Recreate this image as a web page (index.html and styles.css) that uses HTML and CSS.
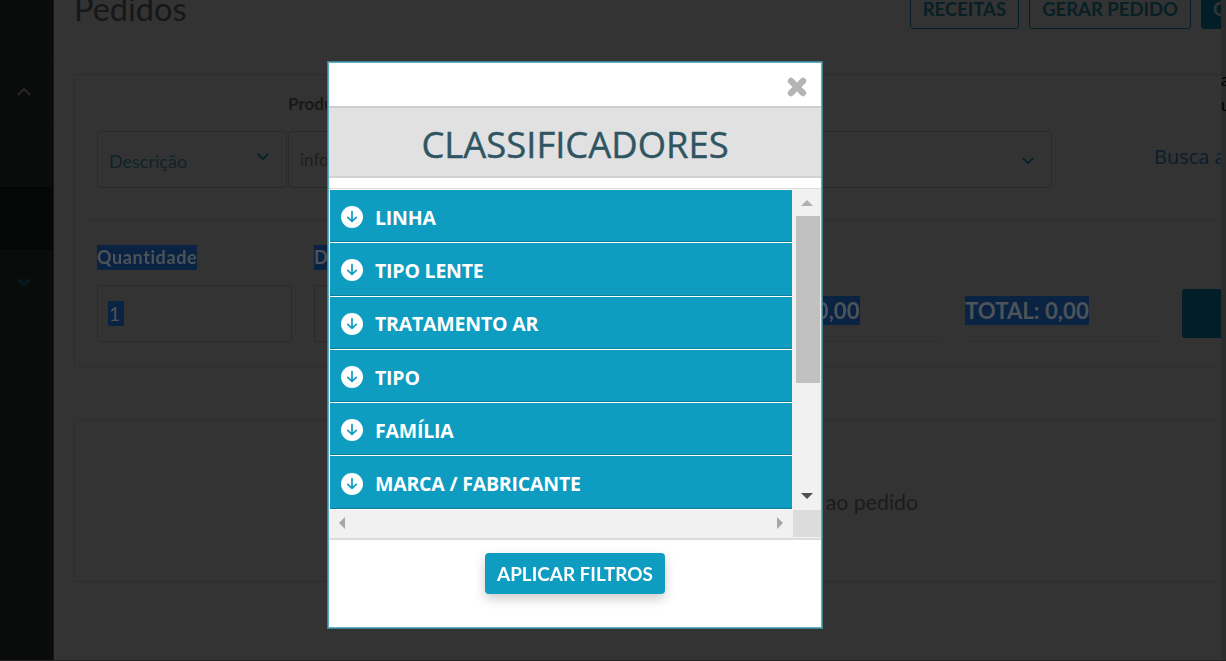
FILE: index.html
```html
<!DOCTYPE html>
<html lang="pt-BR">
<head>
<meta charset="utf-8">
<title>Pedidos</title>
<link rel="stylesheet" href="styles.css">
</head>
<body>
<div class="app">
  <nav class="sidebar">
    <div class="seg seg-a"></div>
    <div class="seg seg-b"><svg class="chev" viewBox="0 0 16 10"><path d="M2 8l6-6 6 6"/></svg></div>
    <div class="seg seg-b"></div>
    <div class="seg seg-c"></div>
    <div class="seg seg-b teal"><svg class="chev" viewBox="0 0 16 10"><path d="M2 2l6 6 6-6"/></svg></div>
    <div class="seg seg-rest"></div>
  </nav>
  <main class="main">
    <header class="page-head">
      <h1 class="page-title">Pedidos</h1>
      <div class="head-actions">
        <a class="btn-outline">RECEITAS</a>
        <a class="btn-outline">GERAR PEDIDO</a>
        <a class="btn-solid">GRAVAR</a>
      </div>
    </header>
    <section class="card card-form">
      <div class="label-row"><span class="label">Produto</span></div>
      <div class="search-row">
        <div class="field select-a"><span class="field-text">Descrição</span><svg class="field-chev" viewBox="0 0 16 10"><path d="M2 2l6 6 6-6"/></svg></div>
        <div class="field input-b"><span class="placeholder">informe o produto</span></div>
        <div class="field select-c"><svg class="field-chev low" viewBox="0 0 16 10"><path d="M2 2l6 6 6-6"/></svg></div>
        <a class="link">Busca avançada</a>
      </div>
      <hr class="divider">
      <div class="qty-row">
        <div class="col col-qty">
          <span class="label sel">Quantidade</span>
          <div class="field qty-field"><span class="sel qty-value">1</span></div>
        </div>
        <div class="col col-disc">
          <span class="label sel">Desconto</span>
          <div class="field qty-field"></div>
        </div>
        <div class="col col-val">
          <div class="total-box"><span class="total sel">VALOR: 0,00</span></div>
        </div>
        <div class="col col-total">
          <div class="total-box"><span class="total sel">TOTAL: 0,00</span></div>
        </div>
        <div class="add-btn"></div>
      </div>
    </section>
    <section class="card card-empty">Nenhum produto adicionado ao pedido</section>
  </main>
  <aside class="edge"><span>a</span><span>u</span></aside>
</div>

<div class="backdrop"></div>
<div class="modal">
  <div class="modal-top">
    <svg class="close" viewBox="0 0 22 22"><path d="M5 5l12 12M17 5L5 17"/></svg>
  </div>
  <div class="modal-title">CLASSIFICADORES</div>
  <div class="modal-gap"></div>
  <div class="scroller">
    <div class="list">
      <div class="item"><svg class="ico" viewBox="0 0 22 22"><circle cx="11" cy="11" r="11"/><path d="M11 5.5v10M6.8 11.3l4.2 4.2 4.2-4.2"/></svg>LINHA</div>
      <div class="item"><svg class="ico" viewBox="0 0 22 22"><circle cx="11" cy="11" r="11"/><path d="M11 5.5v10M6.8 11.3l4.2 4.2 4.2-4.2"/></svg>TIPO LENTE</div>
      <div class="item"><svg class="ico" viewBox="0 0 22 22"><circle cx="11" cy="11" r="11"/><path d="M11 5.5v10M6.8 11.3l4.2 4.2 4.2-4.2"/></svg>TRATAMENTO AR</div>
      <div class="item"><svg class="ico" viewBox="0 0 22 22"><circle cx="11" cy="11" r="11"/><path d="M11 5.5v10M6.8 11.3l4.2 4.2 4.2-4.2"/></svg>TIPO</div>
      <div class="item"><svg class="ico" viewBox="0 0 22 22"><circle cx="11" cy="11" r="11"/><path d="M11 5.5v10M6.8 11.3l4.2 4.2 4.2-4.2"/></svg>FAMÍLIA</div>
      <div class="item"><svg class="ico" viewBox="0 0 22 22"><circle cx="11" cy="11" r="11"/><path d="M11 5.5v10M6.8 11.3l4.2 4.2 4.2-4.2"/></svg>MARCA / FABRICANTE</div>
      <div class="item"></div>
    </div>
    <div class="vbar">
      <svg class="arrow" viewBox="0 0 14 8"><path class="a-light" d="M7 1l6 6H1z"/></svg>
      <div class="track"><div class="thumb"></div></div>
      <svg class="arrow" viewBox="0 0 14 8"><path class="a-dark" d="M1 1h12L7 7z"/></svg>
    </div>
    <div class="hbar">
      <svg class="harrow" viewBox="0 0 8 14"><path d="M7 1v12L1 7z"/></svg>
      <svg class="harrow" viewBox="0 0 8 14"><path d="M1 1v12l6-6z"/></svg>
    </div>
    <div class="corner"></div>
  </div>
  <div class="modal-foot">
    <button class="apply">APLICAR FILTROS</button>
  </div>
</div>
</body>
</html>
```
FILE: styles.css
```css
* { box-sizing: border-box; }
html, body { margin: 0; height: 100%; overflow: hidden; background: #b0b0b0; }
body { font-family: "Lato", "Open Sans", sans-serif; color: #555; }

.app { display: flex; width: 1226px; height: 660px; overflow: hidden; background: #fff; }

.sidebar { width: 54px; flex: none; display: flex; flex-direction: column; background: #323c3c; border-right: 1px solid #6e6e6e; }
.seg { display: flex; align-items: center; justify-content: center; padding-right: 6px; border-bottom: 1px solid #3c4646; }
.seg-a { height: 61px; }
.seg-b { height: 63px; }
.seg-c { height: 64px; background: #1c2626; }
.seg-rest { flex: 1; border-bottom: 0; }
.chev { width: 16px; height: 10px; fill: none; stroke: #c8c8c8; stroke-width: 2; }
.teal .chev { stroke: #0e9cc1; }

.main { flex: 1; min-width: 0; padding-left: 20px; overflow: hidden; }

.page-head { display: flex; justify-content: space-between; align-items: center; height: 41px; margin-top: -12px; margin-bottom: 45px; margin-right: -30px; }
.page-title { margin: 0; font-size: 32.5px; font-weight: 400; color: #6f7478; line-height: 41px; margin-top: -1px; }
.head-actions { display: flex; gap: 10px; }
.btn-outline, .btn-solid { height: 41px; padding: 0 12px; display: flex; align-items: center; font-size: 18.5px; font-weight: 700; border-radius: 3px; }
.btn-outline { border: 1px solid #0e9cc1; color: #2a9cbc; }
.btn-solid { background: #0e9cc1; color: #fff; width: 50px; overflow: hidden; }

.card { border: 1px solid #e2e2e2; background: #fff; margin-right: -20px; }
.card-form { height: 293px; padding-top: 19px; }
.label-row { padding-left: 213px; height: 37px; }
.label { font-size: 17px; font-weight: 700; color: #777; line-height: 20px; }
.search-row { display: flex; align-items: flex-start; margin-left: 22px; height: 57px; }
.field { flex: none; border: 1px solid #cfcfcf; border-radius: 3px; background: #fff; height: 57px; position: relative; display: flex; align-items: center; }
.select-a { width: 190px; padding-left: 11px; }
.field-text { font-size: 18px; color: #4fb0c8; padding-top: 3px; }
.field-chev { width: 14px; height: 9px; fill: none; stroke: #0e9cc1; stroke-width: 1.8; position: absolute; right: 16px; top: 20px; }
.field-chev.low { top: 24px; }
.input-b { width: 500px; margin-left: 1px; padding-left: 11px; }
.placeholder { font-size: 17px; color: #9a9a9a; }
.select-c { width: 264px; }
.link { font-size: 20px; color: #3a8fe0; margin-left: 102px; margin-top: 12px; white-space: nowrap; font-family: "Open Sans", sans-serif; }
.divider { border: 0; border-top: 1px solid #e4e4e4; margin: 31px 0 25px 11px; }
.qty-row { display: flex; margin-left: 22px; gap: 22px; align-items: flex-start; white-space: nowrap; }
.col { flex: none; display: flex; flex-direction: column; align-items: flex-start; }
.col-qty { width: 195px; }
.col-disc { width: 396px; }
.col-val { width: 210px; }
.col-total { width: 195px; margin-left: 1px; }
.col .label { height: 25px; line-height: 25px; font-size: 18px; letter-spacing: .6px; }
.col-qty .qty-field, .col-disc .qty-field { width: 100%; margin-top: 15px; padding-left: 10px; }
.sel { position: relative; z-index: 1; background: #0a2342; color: #4d5358; }
.col .label.sel { color: #4d5358; }
.qty-value { font-size: 19px; line-height: 25px; padding: 0 4px 0 1px; }
.total-box { width: 100%; height: 57px; margin-top: 40px; border-bottom: 1px solid #e9e9e9; display: flex; align-items: center; padding-bottom: 6px; }
.total { font-size: 22.2px; font-weight: 700; line-height: 29px; }
.add-btn { width: 60px; height: 49px; margin-top: 44px; background: #0e9cc1; border-radius: 3px; flex: none; }

.card-empty { height: 162px; margin-top: 53px; display: flex; justify-content: flex-end; align-items: center; padding-right: 322px; padding-top: 2px; font-size: 21.3px; color: #8a8a8a; }

.edge { width: 5px; flex: none; background: #dcdcdc; display: flex; flex-direction: column; padding-top: 70px; overflow: hidden; gap: 5px; font-size: 17px; color: #000; line-height: 20px; }

.backdrop { position: fixed; inset: 0; background: rgba(0, 0, 0, .8); }
.modal { position: fixed; z-index: 2; left: 328px; top: 62px; width: 494px; height: 566px; background: #fff; border: 1px solid #5fb0c4; box-shadow: 0 0 0 1px #3f7f8e; display: flex; flex-direction: column; font-family: "Open Sans", sans-serif; }
.modal-top { height: 43px; flex: none; display: flex; justify-content: flex-end; align-items: center; padding: 4px 13px 0 0; }
.close { width: 22px; height: 22px; fill: none; stroke: #b4b4b4; stroke-width: 6.4; stroke-linecap: round; stroke-linejoin: round; }
.modal-title { height: 72px; flex: none; background: #e1e1e1; border-top: 2px solid #cdcdcd; border-bottom: 2px solid #d2d2d2; display: flex; align-items: center; justify-content: center; padding-top: 3px; font-size: 36.4px; font-weight: 500; color: #2f5563; -webkit-text-stroke: .4px #2f5563; }
.modal-gap { height: 10px; flex: none; }

.scroller { height: 352px; flex: none; display: grid; grid-template-columns: 463px 1fr; grid-template-rows: 321px 1fr; border-top: 1px solid #dcdcdc; border-bottom: 2px solid #dcdcdc; background: #f1f1f1; }
.list { overflow: hidden; padding: 1px 0 0 1px; background: #fff; }
.item { height: 52.3px; margin-bottom: 1px; background: #0e9cc1; border-bottom: 1px solid #0b7f9c; color: #fff; display: flex; align-items: center; padding: 3px 0 0 11px; gap: 12px; font-size: 19.5px; font-weight: 700; letter-spacing: -.2px; }
.ico { width: 22px; height: 22px; flex: none; }
.ico circle { fill: #fff; }
.ico path { fill: none; stroke: #0e9cc1; stroke-width: 1.7; stroke-linecap: round; stroke-linejoin: round; }

.vbar { display: flex; flex-direction: column; align-items: center; padding: 10px 0 10px; background: #f1f1f1; }
.arrow { width: 14px; height: 8px; flex: none; }
.a-light { fill: #b0b0b0; }
.a-dark { fill: #505050; }
.track { flex: 1; width: 100%; padding: 9px 1px 0 4px; }
.thumb { height: 167px; background: #c1c1c1; }
.hbar { display: flex; justify-content: space-between; align-items: center; padding: 0 8px 3px 9px; background: #f1f1f1; }
.harrow { width: 8px; height: 14px; fill: #a6a6a6; }
.corner { height: 27px; background: #dcdcdc; margin-left: 1px; }

.modal-foot { flex: 1; display: flex; justify-content: center; align-items: flex-start; padding-top: 13px; }
.apply { width: 180px; height: 41px; border: 0; border-radius: 4px; background: #0e9cc1; color: #fff; font-family: "Lato", sans-serif; font-size: 18.9px; font-weight: 700; box-shadow: 0 5px 12px rgba(0, 0, 0, .2); padding: 0; }
```
